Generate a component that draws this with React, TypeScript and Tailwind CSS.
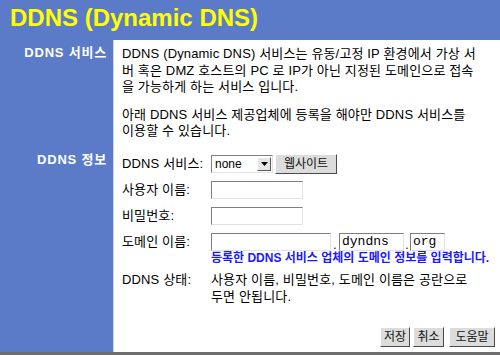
const font = { fontFamily: '"Liberation Sans", Arial, "Noto Sans CJK KR", sans-serif' };

function TextInput({ width, value }: { width: string; value?: string }) {
  return (
    <div
      className={`${width} h-[18px] bg-white border border-t-[#7f7f7f] border-l-[#7f7f7f] border-b-[#e3e3e3] border-r-[#e3e3e3] px-[2px] text-[13px] leading-[16px] tracking-normal text-black font-['Liberation_Mono',monospace]`}
    >
      {value}
    </div>
  );
}

function GrayButton({ label, width }: { label: string; width: string }) {
  return (
    <div
      className={`${width} h-[20px] flex items-center justify-center bg-[#dcdcdc] border border-t-white border-l-white border-b-[#4a4a4a] border-r-[#4a4a4a] text-[12px] tracking-normal text-[#111]`}
    >
      {label}
    </div>
  );
}

export default function App() {
  return (
    <div className="w-[500px] h-[355px] bg-[#5b7bc8] flex flex-col overflow-hidden" style={font}>
      {/* Title */}
      <div className="h-[40px] pl-[10px] pt-[4px] text-[24px] font-bold leading-[28px] text-[#ffff00]">
        DDNS (Dynamic DNS)
      </div>

      <div className="flex flex-1">
        {/* Left labels */}
        <div className="w-[113px] flex flex-col items-end pr-[6px] text-[13px] font-bold tracking-[0.8px] text-white">
          <div className="mt-[5px] leading-[16px]">DDNS 서비스</div>
          <div className="mt-[91px] leading-[16px]">DDNS 정보</div>
        </div>

        {/* Content panel */}
        <div className="flex-1 bg-white border-l border-[#c9d4ee] pl-[8px] pt-[6px] pr-[5px] flex flex-col text-[13px] tracking-[0.15px] text-black">
          <div className="leading-[16.5px] whitespace-nowrap">
            <div>DDNS (Dynamic DNS) 서비스는 유동/고정 IP 환경에서 가상 서</div>
            <div>버 혹은 DMZ 호스트의 PC 로 IP가 아닌 지정된 도메인으로 접속</div>
            <div>을 가능하게 하는 서비스 입니다.</div>
          </div>
          <div className="mt-[11px] leading-[16.5px] whitespace-nowrap">
            <div>아래 DDNS 서비스 제공업체에 등록을 해야만 DDNS 서비스를</div>
            <div>이용할 수 있습니다.</div>
          </div>

          {/* Form */}
          <div className="mt-[15px] flex flex-col gap-[8px]">
            <div className="flex items-center h-[18px]">
              <div className="w-[89px]">DDNS 서비스:</div>
              <div className="w-[62px] h-[18px] flex items-center bg-white border border-t-[#7f7f7f] border-l-[#7f7f7f] border-b-[#e3e3e3] border-r-[#e3e3e3]">
                <span className="flex-1 pl-[3px] text-[12px] leading-[14px] tracking-normal">none</span>
                <div className="w-[14px] h-[14px] mr-[1px] flex items-center justify-center bg-[#e6e6e6] border border-t-white border-l-white border-b-[#5a5a5a] border-r-[#5a5a5a]">
                  <svg width="7" height="4" viewBox="0 0 7 4">
                    <path d="M0 0h7L3.5 4z" fill="#000" />
                  </svg>
                </div>
              </div>
              <div className="ml-[2px]">
                <GrayButton label="웹사이트" width="w-[62px]" />
              </div>
            </div>

            <div className="flex items-center h-[18px]">
              <div className="w-[89px]">사용자 이름:</div>
              <TextInput width="w-[92px]" />
            </div>

            <div className="flex items-center h-[18px]">
              <div className="w-[89px]">비밀번호:</div>
              <TextInput width="w-[92px]" />
            </div>

            <div className="flex flex-col">
              <div className="flex items-center h-[18px]">
                <div className="w-[89px]">도메인 이름:</div>
                <TextInput width="w-[120px]" />
                <span className="w-[8px] text-center text-[12px] leading-[12px] self-end">.</span>
                <TextInput width="w-[65px]" value="dyndns" />
                <span className="w-[6px] text-center text-[12px] leading-[12px] self-end">.</span>
                <TextInput width="w-[35px]" value="org" />
              </div>
              <div className="pl-[89px] mt-[1px] text-[12px] font-bold leading-[13px] tracking-normal text-[#1a1aff] whitespace-nowrap">
                등록한 DDNS 서비스 업체의 도메인 정보를 입력합니다.
              </div>
            </div>

            <div className="flex -mt-[2px] leading-[17px]">
              <div className="w-[89px]">DDNS 상태:</div>
              <div className="whitespace-nowrap">
                <div>사용자 이름, 비밀번호, 도메인 이름은 공란으로</div>
                <div>두면 안됩니다.</div>
              </div>
            </div>
          </div>

          <div className="mt-auto mb-[5px] flex justify-end gap-[3px]">
            <GrayButton label="저장" width="w-[30px]" />
            <GrayButton label="취소" width="w-[31px]" />
            <div className="ml-[2px]">
              <GrayButton label="도움말" width="w-[46px]" />
            </div>
          </div>
        </div>
      </div>

      <div className="h-[3px] bg-[#6e6e6e]" />
    </div>
  );
}
